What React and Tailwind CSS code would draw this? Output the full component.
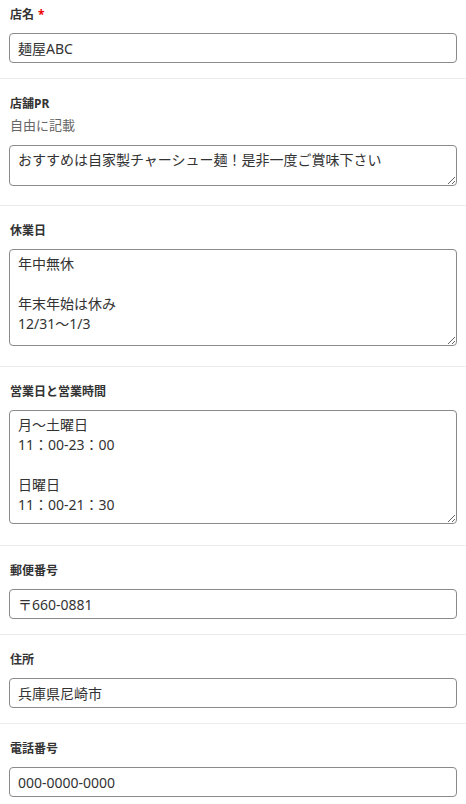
// Shop info edit form
const fieldClass =
  'block w-full border border-[#8a8a8a] rounded-[4px] bg-white px-2 py-1 text-sm leading-5 text-[#333] outline-none';

function Section({ first, label, required, hint, children, bottom = 'pb-[15px]' }) {
  return (
    <div className={`border-b border-[#ececec] px-[9px] ${first ? 'pt-[6px]' : 'pt-4'} ${bottom}`}>
      <div className={`px-px text-xs font-bold leading-[18px] text-[#333] ${hint ? 'mb-[2px]' : 'mb-[9px]'}`}>
        {label}
        {required && <span className="ml-1 text-[#e00]">*</span>}
      </div>
      {hint && <div className="mb-[10px] px-px text-[13px] leading-5 text-[#666]">{hint}</div>}
      {children}
    </div>
  );
}

export default function App() {
  return (
    <div className="min-h-screen bg-white font-['Noto_Sans','Noto_Sans_CJK_JP',sans-serif]">
      <Section first label="店名" required>
        <input className={`${fieldClass} h-[30px]`} defaultValue="麺屋ABC" />
      </Section>

      <Section label="店舗PR" hint="自由に記載" bottom="pb-[19px]">
        <textarea
          className={`${fieldClass} h-[41px] resize-y`}
          defaultValue="おすすめは自家製チャーシュー麺！是非一度ご賞味下さい"
        />
      </Section>

      <Section label="休業日" bottom="pb-[20px]">
        <textarea
          className={`${fieldClass} h-[97px] resize-y`}
          defaultValue={'年中無休\n\n年末年始は休み\n12/31～1/3'}
        />
      </Section>

      <Section label="営業日と営業時間" bottom="pb-[21px]">
        <textarea
          className={`${fieldClass} h-[114px] resize-y`}
          defaultValue={'月～土曜日\n11：00-23：00\n\n日曜日\n11：00-21：30'}
        />
      </Section>

      <Section label="郵便番号">
        <input className={`${fieldClass} h-[30px]`} defaultValue="〒660-0881" />
      </Section>

      <Section label="住所">
        <input className={`${fieldClass} h-[30px]`} defaultValue="兵庫県尼崎市" />
      </Section>

      <Section label="電話番号">
        <input className={`${fieldClass} h-[30px]`} defaultValue="000-0000-0000" />
      </Section>
    </div>
  );
}
